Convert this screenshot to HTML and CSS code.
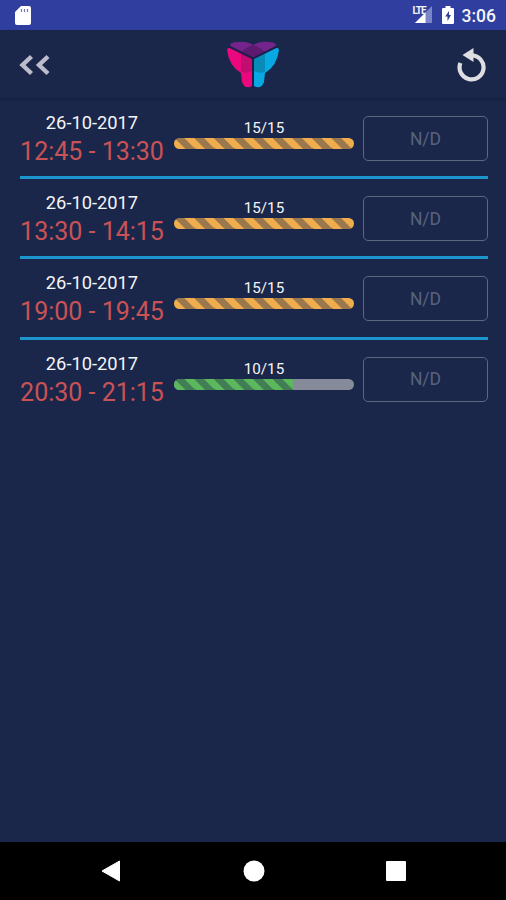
FILE: index.html
```
<!DOCTYPE html>
<html lang="it">
<head>
  <meta charset="UTF-8" />
  <meta name="viewport" content="width=device-width, initial-scale=1.0"/>
  <title>Prenotazioni</title>
  <link rel="stylesheet" href="styles.css">
</head>
<body>
  <div class="status-bar">
    <svg class="sd" width="16" height="19" viewBox="0 0 16 19">
      <path d="M6 0H14Q16 0 16 2V17Q16 19 14 19H2Q0 19 0 17V6Z" fill="#fff"/>
      <path d="M6.500 3v3M9.500 3v3M12.500 3v3" stroke="#7078b5" stroke-width="1.200"/>
    </svg>
    <div class="status-right">
      <span class="lte">LTE</span>
      <svg class="signal" width="17" height="17" viewBox="0 0 17 17">
        <path d="M17 0V17H0Z" fill="#7b86c6"/>
        <path d="M10.500 6.500V17H0Z" fill="#fff"/>
      </svg>
      <svg class="battery" width="12" height="18" viewBox="0 0 12 18">
        <path d="M3.500 0h5v2H11q1 0 1 1v14q0 1-1 1H1q-1 0-1-1V3q0-1 1-1h2.500z" fill="#fff"/>
        <path d="M7 5L3.200 10.500H5.500V15L9 9H7Z" fill="#303f9f"/>
      </svg>
      <span class="clock">3:06</span>
    </div>
  </div>

  <div class="header">
    <svg class="back" width="32" height="24" viewBox="0 0 32 24">
      <path d="M12.500 3.500L3.500 12L12.500 20.500M29 3.500L20 12L29 20.500" fill="none" stroke="#bcbccb" stroke-width="4.400"/>
    </svg>
    <svg class="logo" width="54" height="48" viewBox="0 0 54 48">
      <path d="M27 17L4 6Q3 1 12 1Q21 0 27 4Q33 0 42 1Q51 1 50 6Z" fill="#75248b"/>
      <path d="M27 4Q34 6 39 11L27 17L15 11Q20 6 27 4Z" fill="#5d1b70"/>
      <path d="M1 9Q2 5 7 8L26 18V45Q19 49 16 41L15 32Q3 25 1 9Z" fill="#eb087e"/>
      <path d="M15 12L26 18V30Q20 33 15 31Z" fill="#c20c70"/>
      <path d="M53 9Q52 5 47 8L28 18V45Q35 49 38 41L39 32Q51 25 53 9Z" fill="#08a9e3"/>
      <path d="M39 12L28 18V30Q34 33 39 31Z" fill="#078bb9"/>
      <path d="M3 5.500L27 17.500L51 5.500M27 17V48" fill="none" stroke="#1b1f4a" stroke-width="2"/>
    </svg>
    <svg class="reload" width="30" height="34" viewBox="0 0 30 34">
      <path d="M3.400 15A12 12 0 1 0 15 7.400" fill="none" stroke="#dedee2" stroke-width="4.200"/>
      <path d="M5.500 7L16.500 0V14Z" fill="#dedee2"/>
    </svg>
  </div>

  <div class="list">
    <div class="row">
      <div class="when">
        <div class="date">26-10-2017</div>
        <div class="time">12:45 - 13:30</div>
      </div>
      <div class="places">
        <div class="count">15/15</div>
        <div class="progress"><div class="bar full" style="width: 100%"></div></div>
      </div>
      <button class="book" disabled>N/D</button>
    </div>
    <div class="row">
      <div class="when">
        <div class="date">26-10-2017</div>
        <div class="time">13:30 - 14:15</div>
      </div>
      <div class="places">
        <div class="count">15/15</div>
        <div class="progress"><div class="bar full" style="width: 100%"></div></div>
      </div>
      <button class="book" disabled>N/D</button>
    </div>
    <div class="row">
      <div class="when">
        <div class="date">26-10-2017</div>
        <div class="time">19:00 - 19:45</div>
      </div>
      <div class="places">
        <div class="count">15/15</div>
        <div class="progress"><div class="bar full" style="width: 100%"></div></div>
      </div>
      <button class="book" disabled>N/D</button>
    </div>
    <div class="row">
      <div class="when">
        <div class="date">26-10-2017</div>
        <div class="time">20:30 - 21:15</div>
      </div>
      <div class="places">
        <div class="count">10/15</div>
        <div class="progress"><div class="bar free" style="width: 66%"></div></div>
      </div>
      <button class="book" disabled>N/D</button>
    </div>
  </div>

  <div class="nav-bar">
    <svg width="20" height="22" viewBox="0 0 20 22"><path d="M18.500 1V21L1 11Z" fill="#fff" stroke="#fff" stroke-linejoin="round"/></svg>
    <svg width="22" height="22" viewBox="0 0 22 22"><circle cx="11" cy="11" r="10.500" fill="#fff"/></svg>
    <svg width="20" height="20" viewBox="0 0 20 20"><rect width="20" height="20" rx="1" fill="#fff"/></svg>
  </div>
</body>
</html>
```
FILE: styles.css
```
* {
  box-sizing: border-box;
}

body {
  margin: 0;
  height: 900px;
  display: flex;
  flex-direction: column;
  overflow: hidden;
  background-color: #1b274a;
  color: #f4f5f8;
  font-family: Roboto, sans-serif;
}

svg {
  display: block;
}

.status-bar {
  height: 30px;
  flex: none;
  display: flex;
  justify-content: space-between;
  padding: 6px 10px 0 15px;
  background-color: #303f9f;
}

.status-right {
  display: flex;
}

.lte {
  font-size: 10px;
  line-height: 10px;
  font-weight: bold;
  letter-spacing: -1px;
  margin-right: -11px;
}

.signal {
  margin-right: 10px;
}

.clock {
  font-size: 17.500px;
  line-height: 20px;
  font-weight: 500;
  margin-left: 8px;
}

.header {
  height: 71px;
  flex: none;
  display: flex;
  justify-content: space-between;
  align-items: center;
  padding: 2px 19px 0;
  border-bottom: 3px solid #172344;
}

.logo {
  margin-left: -3px;
}

.list {
  flex: 1;
  padding: 0 18px 0 20px;
  margin-top: -2px;
}

.row {
  height: 80.200px;
  display: flex;
  border-bottom: 3px solid #1d96cf;
}

.row:last-child {
  border-bottom: none;
}

.when {
  width: 144px;
  padding-top: 12px;
  text-align: center;
  white-space: nowrap;
}

.date {
  font-size: 18.300px;
  line-height: 23px;
}

.time {
  font-size: 25px;
  line-height: 36px;
  color: #c95256;
}

.places {
  width: 180px;
  margin-left: 10px;
  padding-top: 19px;
}

.count {
  font-size: 15.200px;
  line-height: 20px;
  text-align: center;
}

.progress {
  height: 11px;
  border-radius: 6px;
  overflow: hidden;
  background-color: #858b98;
}

.bar {
  height: 100%;
  background-image: linear-gradient(45deg, rgba(27, 39, 74, 0.4) 25%, transparent 25%, transparent 50%, rgba(27, 39, 74, 0.4) 50%, rgba(27, 39, 74, 0.4) 75%, transparent 75%);
  background-size: 19.600px 19.600px;
  background-position: 1px 0;
}

.full {
  background-color: #f0ad4e;
}

.free {
  background-color: #5cb85c;
}

.book {
  width: 125px;
  height: 45px;
  margin: 17px 0 0 9px;
  padding: 0;
  border: 1px solid #5c6880;
  border-radius: 5px;
  background: none;
  color: #57637c;
  font-family: inherit;
  font-size: 17.500px;
}

.nav-bar {
  height: 58px;
  flex: none;
  display: flex;
  justify-content: space-between;
  align-items: center;
  padding: 0 100px 0 101px;
  background-color: #000000;
}
```
